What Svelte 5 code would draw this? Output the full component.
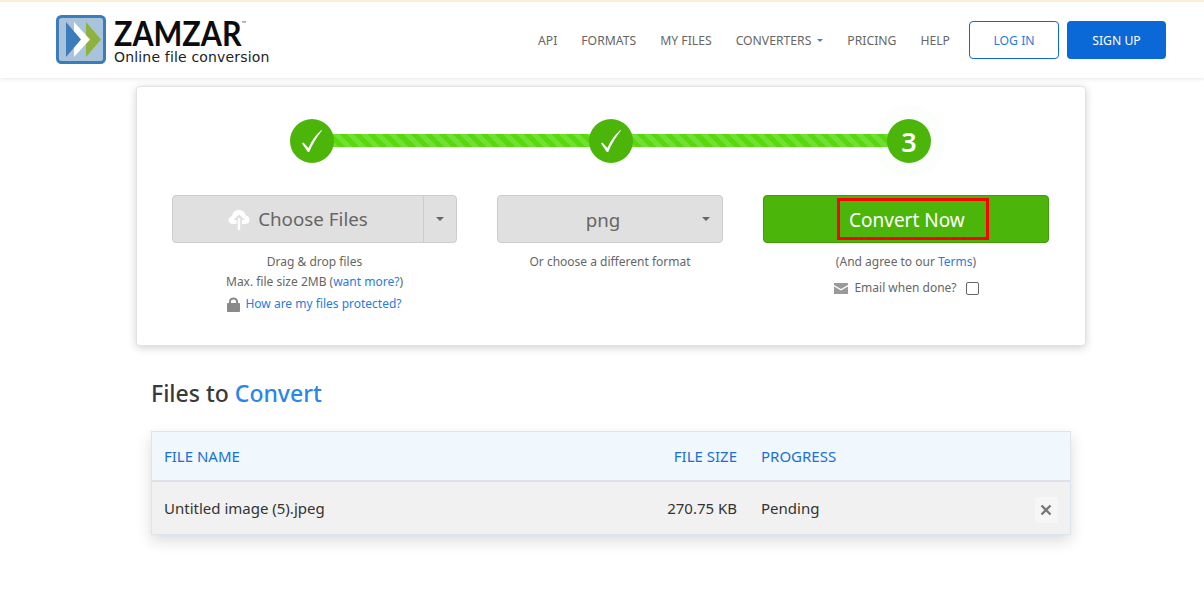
<script>
  const steps = [{ done: true }, { done: true }, { done: false, label: '3' }];
  const nav = ['API', 'FORMATS', 'MY FILES', 'CONVERTERS', 'PRICING', 'HELP'];
</script>

<div class="page">
  <header class="topbar">
    <a class="brand" href="#top">
      <svg class="logo-mark" width="50" height="49" viewBox="0 0 50 49">
        <rect x="1.5" y="1.5" width="47" height="46" rx="4" fill="#a9c3da" stroke="#3b7cbd" stroke-width="3" />
        <polygon points="30,7 45,24.5 30,42" fill="#8db33e" />
        <polygon points="18,7 34,24.5 18,42" fill="#fff" />
        <polygon points="10,7 25,24.5 10,42" fill="#3b7cbd" />
      </svg>
      <span class="brand-text">
        <span class="brand-name">ZAMZAR<sup>™</sup></span>
        <span class="brand-sub">Online file conversion</span>
      </span>
    </a>
    <nav class="nav">
      {#each nav as item}
        <a href="#top" class="nav-link">
          {item}{#if item === 'CONVERTERS'}<span class="nav-caret"></span>{/if}
        </a>
      {/each}
      <a href="#top" class="btn-login">LOG IN</a>
      <a href="#top" class="btn-signup">SIGN UP</a>
    </nav>
  </header>

  <section class="card">
    <div class="steps">
      <div class="steps-bar"></div>
      {#each steps as step}
        <div class="step" class:current={!step.done}>
          {#if step.done}
            <svg width="22" height="24" viewBox="0 0 22 24">
              <path d="M1 14.5 L2.4 13.4 L7.4 19 C10.5 12 15 5.5 20.4 1 L21 1.6 C15.8 8 11.4 15.4 8.2 23 L6.8 23 Z" fill="#fff" />
            </svg>
          {:else}
            {step.label}
          {/if}
        </div>
      {/each}
    </div>

    <div class="cols">
      <div class="col">
        <div class="choose">
          <div class="choose-main">
            <svg width="22" height="22" viewBox="0 0 22 22">
              <path d="M5 16 C2 16 0.5 14 0.5 12 C0.5 10 2 8.4 4 8.2 C4.4 4.6 7.4 2 11 2 C14.4 2 17.2 4.4 17.8 7.6 C20 7.9 21.6 9.8 21.6 12 C21.6 14.2 20 16 17.5 16 L14 16 L14 12 L17 12 L11 6.5 L5.5 12 L8.5 12 L8.5 16 Z" fill="#fff" />
              <rect x="9.8" y="10" width="2.4" height="12" fill="#fff" />
            </svg>
            Choose Files
          </div>
          <div class="choose-side"><span class="caret"></span></div>
        </div>
        <p class="hint first">Drag &amp; drop files</p>
        <p class="hint">Max. file size 2MB (<a href="#top">want more?</a>)</p>
        <p class="hint protected">
          <svg width="13" height="15" viewBox="0 0 13 15">
            <path d="M2 6 V4.5 C2 2 4 0.5 6.5 0.5 C9 0.5 11 2 11 4.5 V6 H12 C12.6 6 13 6.4 13 7 V14 C13 14.6 12.6 15 12 15 H1 C0.4 15 0 14.6 0 14 V7 C0 6.4 0.4 6 1 6 Z M4 6 H9 V4.5 C9 3.2 8 2.4 6.5 2.4 C5 2.4 4 3.2 4 4.5 Z" fill="#8a8a8a" fill-rule="evenodd" />
          </svg>
          <a href="#top">How are my files protected?</a>
        </p>
      </div>

      <div class="col">
        <div class="format">png<span class="caret format-caret"></span></div>
        <p class="hint first">Or choose a different format</p>
      </div>

      <div class="col">
        <button class="convert"><span class="convert-mark">Convert Now</span></button>
        <p class="hint first">(And agree to our <a href="#top">Terms</a>)</p>
        <label class="email">
          <svg width="14" height="11" viewBox="0 0 14 11">
            <path d="M0 0 H14 V2 L7 6 L0 2 Z M0 3.6 L7 7.6 L14 3.6 V11 H0 Z" fill="#9a9a9a" />
          </svg>
          Email when done?
          <span class="checkbox"></span>
        </label>
      </div>
    </div>
  </section>

  <section class="files">
    <h2 class="files-title">Files to <span>Convert</span></h2>
    <div class="table">
      <div class="row head">
        <div class="c-name">FILE NAME</div>
        <div class="c-size">FILE SIZE</div>
        <div class="c-progress">PROGRESS</div>
      </div>
      <div class="row body">
        <div class="c-name">Untitled image (5).jpeg</div>
        <div class="c-size">270.75 KB</div>
        <div class="c-progress">Pending</div>
        <div class="remove">
          <svg width="12" height="12" viewBox="0 0 12 12">
            <path d="M1.5 1.5 L10.5 10.5 M10.5 1.5 L1.5 10.5" stroke="#777" stroke-width="2.4" fill="none" />
          </svg>
        </div>
      </div>
    </div>
  </section>
</div>

<style>
  :global(body) {
    margin: 0;
    background: #fff;
    font-family: 'Noto Sans', 'Open Sans', sans-serif;
  }

  .page {
    height: 613px;
    overflow: hidden;
  }

  a {
    text-decoration: none;
  }

  .topbar {
    box-sizing: border-box;
    height: 78px;
    display: flex;
    justify-content: space-between;
    align-items: center;
    padding: 0 38px 0 56px;
    border-top: 2px solid #fbeed3;
    background: #fff;
    box-shadow: 0 1px 4px rgba(0, 0, 0, 0.1);
  }

  .brand {
    display: flex;
    gap: 8px;
    color: #111;
  }

  .logo-mark {
    margin-top: 0;
  }

  .brand-text {
    display: flex;
    flex-direction: column;
    margin-top: -1px;
  }

  .brand-name {
    display: inline-block;
    transform: scaleX(0.87);
    transform-origin: left center;
    font-family: 'Lato', 'Liberation Sans', sans-serif;
    font-weight: 700;
    font-size: 35px;
    line-height: 36px;
    color: #0c0c0c;
  }

  .brand-name sup {
    font-size: 7px;
    font-weight: 400;
    vertical-align: 20px;
    line-height: 0;
    color: #555;
  }

  .brand-sub {
    font-family: 'DejaVu Sans', sans-serif;
    font-size: 14px;
    line-height: 16px;
    margin-top: -1px;
    color: #222;
    letter-spacing: 0.17px;
  }

  .nav {
    display: flex;
    align-items: center;
    gap: 24px;
  }

  .nav-link {
    font-size: 12.2px;
    color: #666;
    display: flex;
    align-items: center;
  }

  .nav-caret {
    margin-left: 6px;
    border-left: 3px solid transparent;
    border-right: 3px solid transparent;
    border-top: 3px solid #3a85dc;
  }

  .btn-login,
  .btn-signup {
    box-sizing: border-box;
    height: 38px;
    border-radius: 4px;
    display: flex;
    align-items: center;
    justify-content: center;
    font-size: 12.2px;
  }

  .btn-login {
    width: 90px;
    margin-left: -5px;
    border: 1px solid #0a69d6;
    color: #2a7be0;
  }

  .btn-signup {
    width: 99px;
    margin-left: -16px;
    background: #0a69d6;
    color: #fff;
  }

  .card {
    box-sizing: border-box;
    width: 950px;
    height: 260px;
    margin: 8px 0 0 136px;
    padding: 32px 35px 0;
    border: 1px solid #e2e2e2;
    border-radius: 4px;
    background: #fff;
    box-shadow: 0 2px 8px rgba(0, 0, 0, 0.18);
  }

  .steps {
    position: relative;
    width: 641px;
    margin-left: 118px;
    display: flex;
    justify-content: space-between;
  }

  .steps-bar {
    position: absolute;
    left: 20px;
    right: 20px;
    top: 15px;
    height: 13px;
    background: repeating-linear-gradient(45deg, #58d90e 0 5px, #70e032 5px 10px);
  }

  .step {
    position: relative;
    width: 44px;
    height: 44px;
    border-radius: 50%;
    background: #4cb50a;
    color: #fff;
    display: flex;
    align-items: center;
    justify-content: center;
    font-size: 27px;
    font-weight: 600;
  }

  .step.current {
    box-shadow: 0 0 0 14px rgba(76, 181, 10, 0.015);
  }

  .cols {
    display: grid;
    grid-template-columns: 285px 226px 286px;
    gap: 40px;
    margin-top: 32px;
    color: #666;
  }

  .col {
    text-align: center;
  }

  .choose {
    box-sizing: border-box;
    height: 48px;
    display: flex;
    background: #e0e0e0;
    border: 1px solid #ccc;
    border-radius: 4px;
  }

  .choose-main {
    flex: 1;
    display: flex;
    align-items: center;
    justify-content: center;
    gap: 8px;
    font-size: 18.8px;
    color: #666;
    border-right: 1px solid #ccc;
  }

  .choose-side {
    width: 32px;
    display: flex;
    align-items: center;
    justify-content: center;
  }

  .caret {
    display: inline-block;
    border-left: 4px solid transparent;
    border-right: 4px solid transparent;
    border-top: 4px solid #666;
  }

  .format {
    position: relative;
    box-sizing: border-box;
    height: 48px;
    line-height: 47px;
    padding-right: 14px;
    background: #e0e0e0;
    border: 1px solid #ccc;
    border-radius: 4px;
    font-size: 18.7px;
    color: #666;
  }

  .format-caret {
    position: absolute;
    right: 12px;
    top: 21px;
  }

  .hint {
    margin: 0;
    font-size: 12px;
    line-height: 20px;
    color: #666;
  }

  .hint.first {
    margin-top: 9px;
  }

  .hint a {
    color: #2a7be0;
  }

  .hint.protected {
    margin-top: 2px;
    display: flex;
    align-items: center;
    justify-content: center;
    gap: 5px;
  }

  .convert {
    box-sizing: border-box;
    display: flex;
    align-items: center;
    justify-content: center;
    width: 100%;
    height: 48px;
    padding: 0;
    background: #4cb50a;
    border: 1px solid #429c09;
    border-radius: 4px;
    color: #fff;
    font-family: inherit;
    font-size: 19px;
  }

  .convert-mark {
    box-sizing: border-box;
    width: 152px;
    height: 42px;
    margin-left: 14px;
    padding-left: 9px;
    line-height: 38px;
    text-align: left;
    border: 3px solid #f00;
  }

  .email {
    display: flex;
    align-items: center;
    justify-content: center;
    gap: 6px;
    margin-top: 6px;
    padding-left: 1px;
    font-size: 12px;
    line-height: 20px;
  }

  .checkbox {
    box-sizing: border-box;
    width: 13px;
    height: 13px;
    margin-left: 3px;
    border: 1px solid #666;
    border-radius: 2px;
    background: #fff;
  }

  .files {
    margin-left: 151px;
    width: 920px;
  }

  .files-title {
    margin: 30px 0 0;
    font-size: 23px;
    line-height: 34px;
    font-weight: 500;
    color: #3a3a3a;
  }

  .files-title span {
    color: #2a85ec;
  }

  .table {
    margin-top: 21px;
    border: 1px solid #dde5ec;
    box-shadow: 0 6px 14px rgba(0, 0, 0, 0.14);
    font-size: 15px;
  }

  .row {
    position: relative;
    display: flex;
    align-items: center;
  }

  .row.head {
    box-sizing: border-box;
    height: 50px;
    background: #f0f8fe;
    color: #1b6fd8;
    border-bottom: 2px solid #dee2e8;
  }

  .row.body {
    box-sizing: border-box;
    height: 52px;
    background: #f1f1f1;
    color: #333;
  }

  .c-name {
    width: 461px;
    padding-left: 12px;
  }

  .c-size {
    width: 112px;
    text-align: right;
  }

  .c-progress {
    margin-left: 24px;
  }

  .remove {
    position: absolute;
    right: 12px;
    top: 15px;
    width: 23px;
    height: 26px;
    padding-right: 1px;
    box-sizing: border-box;
    display: flex;
    align-items: center;
    justify-content: center;
    background: #f6f6f6;
    border-radius: 3px;
  }
</style>
